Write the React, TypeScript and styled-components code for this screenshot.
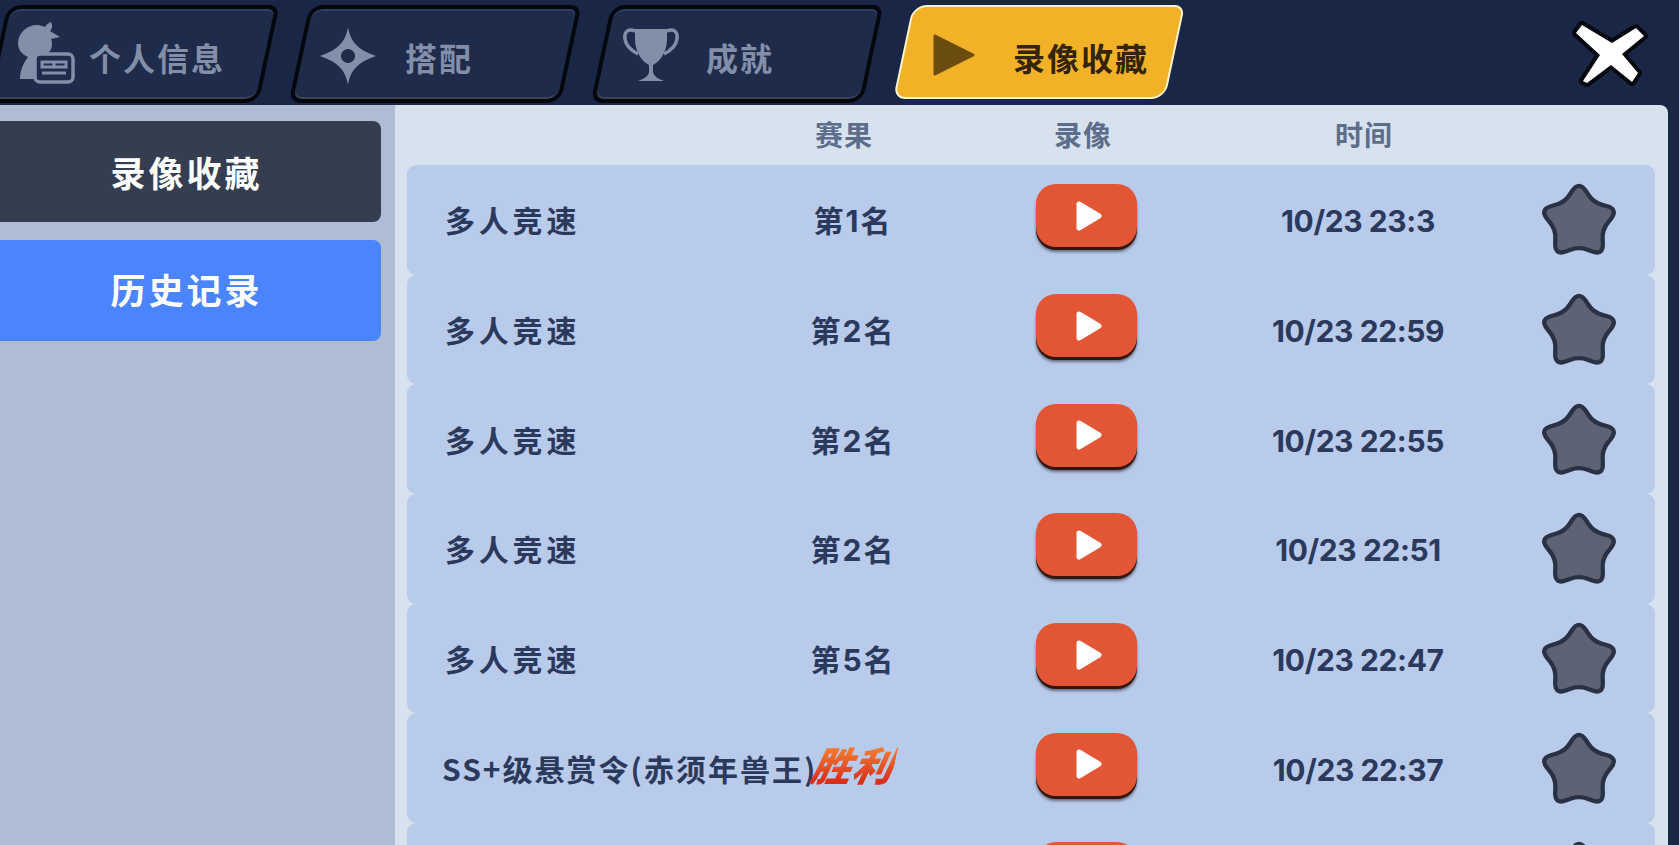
import React from "react";
import styled, { createGlobalStyle } from "styled-components";

const Global = createGlobalStyle`
  html, body { margin: 0; padding: 0; background: #1a2645; }
  body { font-family: "Noto Sans CJK SC", "Noto Sans", sans-serif; }
`;

const Screen = styled.div`
  width: 1679px;
  height: 845px;
  overflow: hidden;
  display: flex;
  flex-direction: column;
  background: #1a2645;
`;

const TopBar = styled.header`
  height: 105px;
  flex: none;
  display: flex;
  align-items: flex-start;
  gap: 30px;
  padding-top: 5px;
  box-sizing: border-box;
  margin-left: -3px;
`;

const Tab = styled.div<{ $active?: boolean; $pad: number }>`
  position: relative;
  width: 272px;
  height: ${(p) => (p.$active ? 94 : 98)}px;
  flex: none;
  display: flex;
  align-items: center;
  padding-left: ${(p) => p.$pad}px;
  padding-top: ${(p) => (p.$active ? 9 : 6)}px;
  box-sizing: border-box;
  font-size: 32px;
  font-weight: 700;
  letter-spacing: 2px;
  color: ${(p) => (p.$active ? "#33240a" : "#838ea9")};
  &::before {
    content: "";
    position: absolute;
    inset: 0;
    transform: skewX(-12deg);
    box-sizing: border-box;
    border-radius: 14px 10px 14px 12px;
    background: ${(p) => (p.$active ? "#f2b228" : "#1f2b4b")};
    border: ${(p) => (p.$active ? "2px solid #fff3d0" : "4px solid #05070f")};
    box-shadow: ${(p) => (p.$active ? "none" : "inset 0 2px 0 #2c3d66, inset 0 -2px 0 #3a4258")};
  }
`;

const TabIcon = styled.svg<{ $w: number; $shift?: number }>`
  position: relative;
  width: ${(p) => p.$w}px;
  height: 66px;
  flex: none;
  margin-top: ${(p) => p.$shift ?? 0}px;
`;

const TabLabel = styled.span<{ $gap: number }>`
  position: relative;
  margin-left: ${(p) => p.$gap}px;
  white-space: nowrap;
  line-height: 1;
`;

const CloseIcon = styled.svg`
  width: 84px;
  height: 74px;
  flex: none;
  margin: 14px 27px 0 auto;
`;

const Body = styled.div`
  flex: 1;
  min-height: 0;
  display: flex;
  padding-right: 11px;
`;

const Sidebar = styled.nav`
  width: 395px;
  flex: none;
  box-sizing: border-box;
  background: #aebcd6;
  padding-top: 16px;
  display: flex;
  flex-direction: column;
  gap: 18px;
`;

const SideItem = styled.div<{ $active?: boolean }>`
  width: 389px;
  height: 101px;
  margin-left: -8px;
  border-radius: 8px;
  display: flex;
  align-items: center;
  justify-content: center;
  box-sizing: border-box;
  padding-bottom: ${(p) => (p.$active ? 0 : 4)}px;
  font-size: 35px;
  font-weight: 700;
  letter-spacing: 3px;
  color: #ffffff;
  background: ${(p) => (p.$active ? "#343e50" : "#4a85ff")};
`;

const Panel = styled.main`
  flex: 1;
  min-width: 0;
  background: #d8e2ef;
  border-radius: 0 8px 0 0;
  padding: 0 13px 0 12px;
  overflow: hidden;
`;

const HeaderRow = styled.div`
  height: 60px;
  display: grid;
  grid-template-columns: 375px 124px 354px 208px;
  align-items: center;
  justify-items: center;
  font-size: 28px;
  font-weight: 700;
  letter-spacing: 1px;
  color: #5d6d8c;
  padding-bottom: 3px;
  box-sizing: border-box;
`;

const Row = styled.div`
  height: 109.7px;
  display: grid;
  grid-template-columns: 345px 126px 340px 204px 1fr;
  align-items: center;
  padding: 0 37px 0 38px;
  box-sizing: border-box;
  background: #b9cbea;
  border-radius: 9px;
  color: #2b3a5c;
  font-weight: 700;
`;

const Name = styled.div`
  font-size: 30px;
  letter-spacing: 3.8px;
  white-space: nowrap;
  padding-bottom: 1px;
`;

const NarrowName = styled(Name)`
  letter-spacing: 2px;
  margin-left: -3px;
`;

const Result = styled.div`
  font-size: 30px;
  letter-spacing: 2px;
  text-align: center;
  white-space: nowrap;
  padding-bottom: 1px;
  font-family: "Inter", "Noto Sans CJK SC", sans-serif;
  font-weight: 700;
`;

const Victory = styled.span`
  display: inline-block;
  font-size: 40px;
  font-style: italic;
  font-weight: 900;
  letter-spacing: 1px;
  line-height: 1;
  transform: skewX(-12deg);
  background: linear-gradient(180deg, #f2762f 10%, #d9301c 85%);
  -webkit-background-clip: text;
  background-clip: text;
  color: transparent;
`;

const PlayButton = styled.button`
  justify-self: center;
  width: 101px;
  height: 63px;
  margin-top: -8px;
  border: 0;
  padding: 0;
  border-radius: 20px;
  background: #e35635;
  box-shadow: 0 3px 0 #33170f, 0 5px 3px rgba(30, 30, 45, 0.55);
  display: flex;
  align-items: center;
  justify-content: center;
`;

const PlayGlyph = styled.svg`
  width: 30px;
  height: 36px;
  margin: 0 0 0 5px;
`;

const Time = styled.div`
  font-family: "Inter", sans-serif;
  font-size: 30px;
  font-weight: 700;
  text-align: center;
  white-space: nowrap;
  letter-spacing: -0.4px;
  padding-top: 3px;
`;

const Star = styled.svg`
  justify-self: end;
  width: 78px;
  height: 76px;
  margin-top: 1px;
`;

type Pt = [number, number];

function roundedStar(): string {
  const cx = 50;
  const cy = 54;
  const pts: { p: Pt; outer: boolean }[] = [];
  for (let i = 0; i < 10; i++) {
    const outer = i % 2 === 0;
    const r = outer ? 58 : 34;
    const a = (-90 + i * 36) * (Math.PI / 180);
    pts.push({ p: [cx + r * Math.cos(a), cy + r * Math.sin(a)], outer });
  }
  const lerp = (a: Pt, b: Pt, t: number): Pt => [a[0] + (b[0] - a[0]) * t, a[1] + (b[1] - a[1]) * t];
  let d = "";
  pts.forEach((v, i) => {
    const prev = pts[(i + 9) % 10].p;
    const next = pts[(i + 1) % 10].p;
    const f = v.outer ? 0.48 : 0.35;
    const s = lerp(v.p, prev, f);
    const e = lerp(v.p, next, f);
    d += `${i === 0 ? "M" : "L"}${s[0].toFixed(1)} ${s[1].toFixed(1)}Q${v.p[0].toFixed(1)} ${v.p[1].toFixed(1)} ${e[0].toFixed(1)} ${e[1].toFixed(1)}`;
  });
  return d + "Z";
}

const STAR_PATH = roundedStar();

const StarIcon = () => (
  <Star viewBox="-3 -2 106 106">
    <path d={STAR_PATH} fill="#5d6274" stroke="#2a3145" strokeWidth="6" strokeLinejoin="round" />
  </Star>
);

const PlayBtn = () => (
  <PlayButton aria-label="播放">
    <PlayGlyph viewBox="0 0 30 36">
      <path d="M5 6 L25 18 L5 30 Z" fill="#fff" stroke="#fff" strokeWidth="5" strokeLinejoin="round" />
    </PlayGlyph>
  </PlayButton>
);

const rows = [
  { result: "第1名", time: "10/23 23:3" },
  { result: "第2名", time: "10/23 22:59" },
  { result: "第2名", time: "10/23 22:55" },
  { result: "第2名", time: "10/23 22:51" },
  { result: "第5名", time: "10/23 22:47" },
];

export default function App() {
  return (
    <Screen>
      <Global />
      <TopBar>
        <Tab $pad={19}>
          <TabIcon $w={60} $shift={-10} viewBox="0 0 60 66">
            <path
              d="M35 3c2 4 1 7-1 9l10 6-9 2c2 5 1 11-3 14H24c-4 4-5 14-5 26H4c0-9 4-17 8-22C5 35 2 30 2 24 2 14 11 6 21 6c3 0 6 1 8 2 1-2 3-4 6-5z"
              fill="#838ea9"
            />
            <rect x="19" y="35" width="38" height="28" rx="5" fill="#1f2b4b" stroke="#838ea9" strokeWidth="3.5" />
            <path d="M26 43h24v5H26zM26 54h24" stroke="#838ea9" strokeWidth="3" fill="none" />
            <path d="M38 43v5" stroke="#838ea9" strokeWidth="3" />
          </TabIcon>
          <TabLabel $gap={13}>个人信息</TabLabel>
        </Tab>
        <Tab $pad={19}>
          <TabIcon $w={60} $shift={-3} viewBox="0 0 60 66">
            <path
              fillRule="evenodd"
              d="M30 4C32 18 40 27 58 33 40 39 32 48 30 62 28 48 20 39 2 33 20 27 28 18 30 4ZM30 26a7 7 0 1 0 .01 0Z"
              fill="#838ea9"
            />
          </TabIcon>
          <TabLabel $gap={27}>搭配</TabLabel>
        </Tab>
        <Tab $pad={20}>
          <TabIcon $w={60} $shift={-6} viewBox="0 0 60 66">
            <path
              d="M14 8h32v10c0 14-8 23-14 26v7c1 5 6 7 11 9H17c5-2 10-4 11-9v-7C22 41 14 32 14 18z"
              fill="#838ea9"
            />
            <path
              d="M14 10C6 7 3 12 4 18c1 7 7 12 13 15M46 10c8-3 11 2 10 8-1 7-7 12-13 15"
              fill="none"
              stroke="#838ea9"
              strokeWidth="3.5"
            />
          </TabIcon>
          <TabLabel $gap={25}>成就</TabLabel>
        </Tab>
        <Tab $active $pad={20}>
          <TabIcon $w={60} $shift={-4} viewBox="0 0 60 66">
            <path d="M12 14 L50 33 L12 52 Z" fill="#6b4d10" stroke="#6b4d10" strokeWidth="3" strokeLinejoin="round" />
          </TabIcon>
          <TabLabel $gap={30}>录像收藏</TabLabel>
        </Tab>
        <CloseIcon viewBox="0 0 84 74">
          <path
            d="M14 6 L44 24 L68 9 L76 17 L54 35 L70 54 L64 63 L43 46 L19 64 L15 62 L32 36 L8 14 Z"
            fill="#ffffff"
            stroke="#05070f"
            strokeWidth="8"
            strokeLinejoin="round"
            paintOrder="stroke"
          />
        </CloseIcon>
      </TopBar>
      <Body>
        <Sidebar>
          <SideItem $active>录像收藏</SideItem>
          <SideItem>历史记录</SideItem>
        </Sidebar>
        <Panel>
          <HeaderRow>
            <span />
            <span>赛果</span>
            <span>录像</span>
            <span>时间</span>
          </HeaderRow>
          {rows.map((r) => (
            <Row key={r.time}>
              <Name>多人竞速</Name>
              <Result>{r.result}</Result>
              <PlayBtn />
              <Time>{r.time}</Time>
              <StarIcon />
            </Row>
          ))}
          <Row>
            <NarrowName>SS+级悬赏令(赤须年兽王)</NarrowName>
            <Result>
              <Victory>胜利</Victory>
            </Result>
            <PlayBtn />
            <Time>10/23 22:37</Time>
            <StarIcon />
          </Row>
          <Row>
            <span />
            <span />
            <PlayBtn />
            <span />
            <StarIcon />
          </Row>
        </Panel>
      </Body>
    </Screen>
  );
}
